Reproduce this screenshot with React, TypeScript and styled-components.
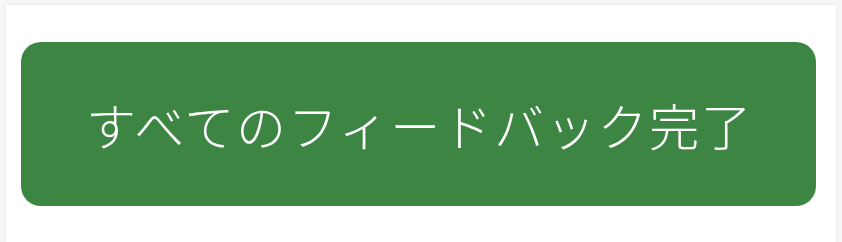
import { createGlobalStyle } from 'styled-components'
import styled from 'styled-components'

const GlobalStyle = createGlobalStyle`
  html, body {
    margin: 0;
    padding: 0;
    background: #f6f6f6;
  }
  body {
    font-family: 'Noto Sans CJK JP', 'Noto Sans', sans-serif;
  }
`

const Page = styled.div`
  padding: 5px 6px 0 6px;
  height: 242px;
  box-sizing: border-box;
`

const Card = styled.div`
  background: #ffffff;
  height: 100%;
  box-sizing: border-box;
  padding: 37px 20px 0 15px;
  box-shadow: 0 0 4px rgba(0, 0, 0, 0.08);
`

const DoneButton = styled.button`
  display: flex;
  align-items: center;
  justify-content: center;
  width: 100%;
  height: 164px;
  border: none;
  border-radius: 20px;
  background: #3c8542;
  color: #ffffff;
  font-family: 'Noto Sans CJK JP', sans-serif;
  font-size: 50px;
  font-weight: 300;
  letter-spacing: 1.8px;
  padding: 0 0 0 2px;
  cursor: pointer;
`

export default function App() {
  return (
    <>
      <GlobalStyle />
      <Page>
        <Card>
          <DoneButton>すべてのフィードバック完了</DoneButton>
        </Card>
      </Page>
    </>
  )
}
